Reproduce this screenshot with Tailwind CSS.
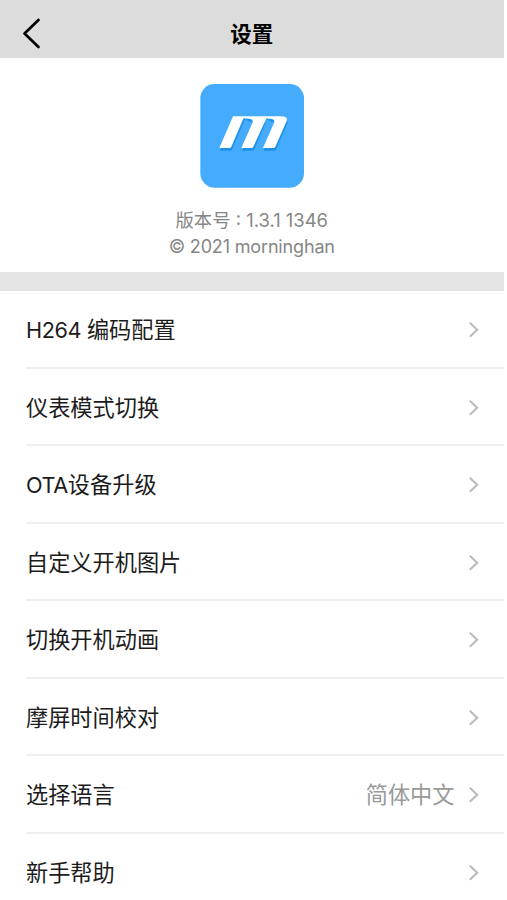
<!DOCTYPE html>
<html lang="zh-CN">
<head>
<meta charset="utf-8">
<title>设置</title>
<script src="https://cdn.jsdelivr.net/npm/@tailwindcss/browser@4"></script>
</head>
<body class="bg-white h-[900px] overflow-hidden font-['Inter','Noto_Sans_CJK_SC',sans-serif] text-[#1c1c1c]">
<svg class="hidden"><symbol id="chevron" viewBox="0 0 12 18"><path d="M1.8 1.7 9.2 8.7 1.8 15.7" fill="none" stroke="#bcbcbc" stroke-width="2.2"/></symbol></svg>
<div class="w-[503.5px]">
  <header class="grid grid-cols-[1fr_auto_1fr] items-center h-[58px] bg-[#dcdcdc] pt-[9px]">
    <svg class="ml-[22px] w-[20px] h-[32px]" viewBox="0 0 20 32"><path d="M16.5 2 2.5 15.5 16.5 29" fill="none" stroke="#000" stroke-width="2.7" stroke-linecap="round" stroke-linejoin="round"/></svg>
    <h1 class="pt-px text-[21.5px] leading-[30px] font-bold text-black">设置</h1>
  </header>
  <section class="flex flex-col items-center h-[213.5px] pt-[26px]">
    <svg class="w-[104px] h-[104px]" viewBox="30 27 312 312">
      <rect x="31" y="27" width="311" height="311" rx="43" fill="#45abfd"/>
      <g fill="#1f93ea" transform="translate(2 8)">
        <path d="M129 124H163L125 215Q123 219 119 219H88Z"/>
        <path d="M163 124H186Q204 124 226 134L191 215Q189 219 185 219H154L187 144Q192 132 176 132Z"/>
        <path d="M226 124H271Q296 124 290 138L257 215Q255 219 251 219H219L252 144Q257 132 241 132Z"/>
      </g>
      <g fill="#fff">
        <path d="M129 124H163L124 215Q122 219 118 219H88Z"/>
        <path d="M163 124H215Q232 124 227 135L190 215Q188 219 184 219H154L187 144Q192 132 176 131L160 129Z"/>
        <path d="M215 124H271Q296 124 290 138L256 215Q254 219 250 219H219L252 144Q257 132 241 131L222 129Z"/>
      </g>
    </svg>
    <div class="mt-[19px] text-center text-[18px] leading-[26px] text-[#868686]">
      <p class="text-[18.4px]">版本号 : 1.3.1 1346</p>
      <p class="pt-px tracking-[-0.16px]">© 2021 morninghan</p>
    </div>
  </section>
  <div class="h-[19.5px] bg-[#e5e5e5]"></div>
  <main class="pl-[26px] text-[22.2px] leading-[32px]">
    <div class="flex items-center h-[77.5px] border-b-2 border-[#efefef] pt-[2px] pr-[24px]"><span class="grow"><span class="text-[21.7px] tracking-[-0.4px]">H264 </span>编码配置</span><svg class="w-[12px] h-[18px]"><use href="#chevron"/></svg></div>
    <div class="flex items-center h-[77.5px] border-b-2 border-[#efefef] pt-[3px] pr-[24px]"><span class="grow">仪表模式切换</span><svg class="w-[12px] h-[18px]"><use href="#chevron"/></svg></div>
    <div class="flex items-center h-[77.5px] border-b-2 border-[#efefef] pt-[3px] pr-[24px]"><span class="grow"><span class="text-[21.7px] tracking-[-0.4px]">OTA</span>设备升级</span><svg class="w-[12px] h-[18px]"><use href="#chevron"/></svg></div>
    <div class="flex items-center h-[77.5px] border-b-2 border-[#efefef] pt-[3px] pr-[24px]"><span class="grow">自定义开机图片</span><svg class="w-[12px] h-[18px]"><use href="#chevron"/></svg></div>
    <div class="flex items-center h-[77.5px] border-b-2 border-[#efefef] pt-[3px] pr-[24px]"><span class="grow">切换开机动画</span><svg class="w-[12px] h-[18px]"><use href="#chevron"/></svg></div>
    <div class="flex items-center h-[77.5px] border-b-2 border-[#efefef] pt-[3px] pr-[24px]"><span class="grow">摩屏时间校对</span><svg class="w-[12px] h-[18px]"><use href="#chevron"/></svg></div>
    <div class="flex items-center h-[77.5px] border-b-2 border-[#efefef] pt-[3px] pr-[24px]"><span class="grow">选择语言</span><span class="mr-[13px] text-[#999]">简体中文</span><svg class="w-[12px] h-[18px]"><use href="#chevron"/></svg></div>
    <div class="flex items-center h-[77.5px] pt-px pr-[24px]"><span class="grow">新手帮助</span><svg class="w-[12px] h-[18px]"><use href="#chevron"/></svg></div>
  </main>
</div>
</body>
</html>
